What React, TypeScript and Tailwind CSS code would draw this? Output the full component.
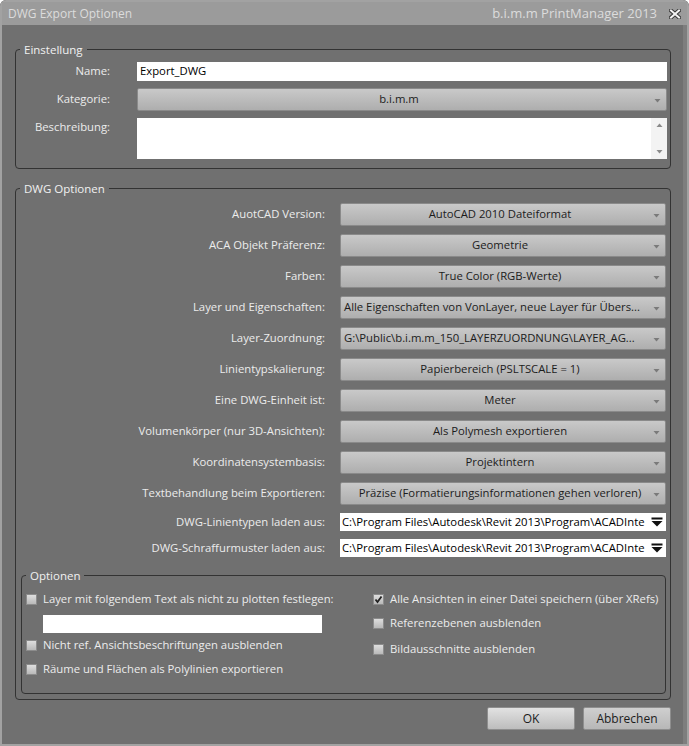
import React from "react";

const font = { fontFamily: '"Open Sans", "Noto Sans", sans-serif' };

function Arrow() {
  return (
    <svg width="7" height="5" viewBox="0 0 7 5" className="shrink-0">
      <path d="M0.5 1 L6.5 1 L3.5 4.5 Z" fill="#7a7a7a" />
    </svg>
  );
}

function Combo({ text, left }: { text: string; left?: boolean }) {
  return (
    <div className="relative h-[23px] w-full min-w-0 rounded-[2px] border border-[#8a8a8a] bg-gradient-to-b from-[#c9c9c9] to-[#aeaeae] flex items-center text-[11.3px] text-[#1c1c1c]">
      <div className={"flex-1 min-w-0 whitespace-nowrap " + (left ? "pl-[3px] pr-[16px]" : "text-center pr-[6px]")}>{text}</div>
      <div className="absolute right-[5px] top-[9px]">
        <Arrow />
      </div>
    </div>
  );
}

function FileInput({ text }: { text: string }) {
  return (
    <div className="h-[18px] w-full min-w-0 bg-white flex items-center text-[11.3px] text-black">
      <div className="flex-1 min-w-0 whitespace-nowrap pl-[2px]">{text}</div>
      <svg width="12" height="10" viewBox="0 0 12 10" className="mx-[3px] shrink-0">
        <rect x="0.5" y="0.5" width="11" height="2" fill="#111" />
        <path d="M0.5 4 L11.5 4 L6 9.5 Z" fill="#111" />
      </svg>
    </div>
  );
}

function Check({ checked }: { checked?: boolean }) {
  return (
    <div className="w-[11px] h-[11px] shrink-0 border border-[#8c8c8c] bg-gradient-to-b from-[#dedede] to-[#b9b9b9] flex items-center justify-center">
      {checked && (
        <svg width="9" height="9" viewBox="0 0 9 9">
          <path d="M1.5 4.5 L3.5 7 L7.5 1.5" stroke="#222" strokeWidth="1.8" fill="none" />
        </svg>
      )}
    </div>
  );
}

function CheckRow({ label, checked }: { label: string; checked?: boolean }) {
  return (
    <div className="flex items-center gap-[6px] h-[18px] text-[11.3px] text-[#ececec]">
      <Check checked={checked} />
      <span className="whitespace-nowrap">{label}</span>
    </div>
  );
}

const rows: { label: string; value: string; left?: boolean }[] = [
  { label: "AuotCAD Version:", value: "AutoCAD 2010 Dateiformat" },
  { label: "ACA Objekt Präferenz:", value: "Geometrie" },
  { label: "Farben:", value: "True Color (RGB-Werte)" },
  { label: "Layer und Eigenschaften:", value: "Alle Eigenschaften von VonLayer, neue Layer für Übers...", left: true },
  { label: "Layer-Zuordnung:", value: "G:\\Public\\b.i.m.m_150_LAYERZUORDNUNG\\LAYER_AG...", left: true },
  { label: "Linientypskalierung:", value: "Papierbereich (PSLTSCALE = 1)" },
  { label: "Eine DWG-Einheit ist:", value: "Meter" },
  { label: "Volumenkörper (nur 3D-Ansichten):", value: "Als Polymesh exportieren" },
  { label: "Koordinatensystembasis:", value: "Projektintern" },
  { label: "Textbehandlung beim Exportieren:", value: "Präzise (Formatierungsinformationen gehen verloren)" },
];

const labelCls = "w-[309px] shrink-0 text-right text-[11.3px] text-[#ececec] whitespace-nowrap";

export default function App() {
  return (
    <div style={font} className="w-[689px] h-[746px] overflow-hidden bg-[#4f4f4f] rounded-t-[6px]">
      <div className="w-full h-full border-[2px] border-[#a2a2a2] rounded-t-[5px] flex flex-col bg-[#707070]">
        {/* Title bar */}
        <div className="h-[23px] shrink-0 bg-[#9b9b9b] flex items-center pl-[6px] pr-[6px] text-[12px] text-[#dcdcdc]">
          <span className="flex-1">DWG Export Optionen</span>
          <span className="text-[13px] mr-[12px]">b.i.m.m PrintManager 2013</span>
          <svg width="12" height="10" viewBox="0 0 12 10">
            <path d="M2 1.5 L10 8.5 M10 1.5 L2 8.5" stroke="#3a3a3a" strokeWidth="4" strokeLinecap="square" />
            <path d="M2 1.5 L10 8.5 M10 1.5 L2 8.5" stroke="#f4f4f4" strokeWidth="2" strokeLinecap="square" />
          </svg>
        </div>

        <div className="flex-1 min-w-0 flex flex-col pl-[13px] pr-[12px] border-r-[4px] border-[#7e7e7e]">
          {/* Einstellung */}
          <fieldset className="min-w-0 mt-[16px] border border-[#333333] rounded-[4px] pr-[3px] pb-[9px]">
            <legend className="ml-[4px] px-[4px] text-[11.5px] leading-[17px] text-[#f0f0f0]">Einstellung</legend>
            <div className="flex flex-col gap-[7px] pt-[4px]">
              <div className="flex items-center gap-[27px]">
                <div className="w-[94px] text-right text-[11.3px] text-[#ececec]">Name:</div>
                <div className="flex-1 h-[19px] bg-white flex items-center pl-[3px] text-[11.3px] text-black">Export_DWG</div>
              </div>
              <div className="flex items-center gap-[27px]">
                <div className="w-[94px] text-right text-[11.3px] text-[#ececec]">Kategorie:</div>
                <div className="flex-1 min-w-0">
                  <Combo text="b.i.m.m" />
                </div>
              </div>
              <div className="flex items-start gap-[27px]">
                <div className="w-[94px] text-right text-[11.3px] text-[#ececec] pt-[1px]">Beschreibung:</div>
                <div className="flex-1 h-[41px] bg-white flex justify-end">
                  <div className="w-[16px] h-full bg-[#f3f3f3] flex flex-col items-center justify-between py-[5px]">
                    <svg width="7" height="5" viewBox="0 0 7 5"><path d="M0.5 4 L6.5 4 L3.5 0.5 Z" fill="#8a8a8a" /></svg>
                    <svg width="7" height="5" viewBox="0 0 7 5"><path d="M0.5 1 L6.5 1 L3.5 4.5 Z" fill="#8a8a8a" /></svg>
                  </div>
                </div>
              </div>
            </div>
          </fieldset>

          {/* DWG Optionen */}
          <fieldset className="min-w-0 mt-[11px] border border-[#333333] rounded-[4px] pr-[4px] pb-[5px]">
            <legend className="ml-[4px] px-[4px] text-[11.5px] leading-[17px] text-[#f0f0f0]">DWG Optionen</legend>
            <div className="flex flex-col gap-[8px] pt-[6px]">
              {rows.map((r) => (
                <div key={r.label} className="flex items-center gap-[15px] min-w-0">
                  <div className={labelCls}>{r.label}</div>
                  <div className="flex-1 min-w-0">
                    <Combo text={r.value} left={r.left} />
                  </div>
                </div>
              ))}
              <div className="flex items-center gap-[15px] min-w-0">
                <div className={labelCls}>DWG-Linientypen laden aus:</div>
                <div className="flex-1 min-w-0">
                  <FileInput text="C:\Program Files\Autodesk\Revit 2013\Program\ACADInte" />
                </div>
              </div>
              <div className="flex items-center gap-[15px] min-w-0">
                <div className={labelCls}>DWG-Schraffurmuster laden aus:</div>
                <div className="flex-1 min-w-0">
                  <FileInput text="C:\Program Files\Autodesk\Revit 2013\Program\ACADInte" />
                </div>
              </div>
            </div>

            {/* Optionen */}
            <fieldset className="min-w-0 mt-[10px] ml-[5px] border border-[#333333] rounded-[4px] pb-[15px]">
              <legend className="ml-[4px] px-[4px] text-[11.5px] leading-[17px] text-[#f0f0f0]">Optionen</legend>
              <div className="flex pt-[6px] pl-[4px]">
                <div className="w-[347px] flex flex-col">
                  <CheckRow label="Layer mit folgendem Text als nicht zu plotten festlegen:" />
                  <div className="ml-[17px] mt-[7px] w-[279px] h-[18px] bg-white" />
                  <div className="mt-[3px]">
                    <CheckRow label="Nicht ref. Ansichtsbeschriftungen ausblenden" />
                  </div>
                  <div className="mt-[6px]">
                    <CheckRow label="Räume und Flächen als Polylinien exportieren" />
                  </div>
                </div>
                <div className="flex flex-col">
                  <CheckRow label="Alle Ansichten in einer Datei speichern (über XRefs)" checked />
                  <div className="mt-[6px]">
                    <CheckRow label="Referenzebenen ausblenden" />
                  </div>
                  <div className="mt-[8px]">
                    <CheckRow label="Bildausschnitte ausblenden" />
                  </div>
                </div>
              </div>
            </fieldset>
          </fieldset>

          {/* Buttons */}
          <div className="flex justify-end gap-[8px] mt-[7px]">
            <button className="w-[88px] h-[23px] rounded-[2px] border border-[#8e8e8e] bg-gradient-to-b from-[#e2e2e2] to-[#bdbdbd] text-[12px] text-[#1c1c1c]">OK</button>
            <button className="w-[88px] h-[23px] rounded-[2px] border border-[#8e8e8e] bg-gradient-to-b from-[#cfcfcf] to-[#b7b7b7] text-[12px] text-[#1c1c1c]">Abbrechen</button>
          </div>
        </div>
      </div>
    </div>
  );
}
